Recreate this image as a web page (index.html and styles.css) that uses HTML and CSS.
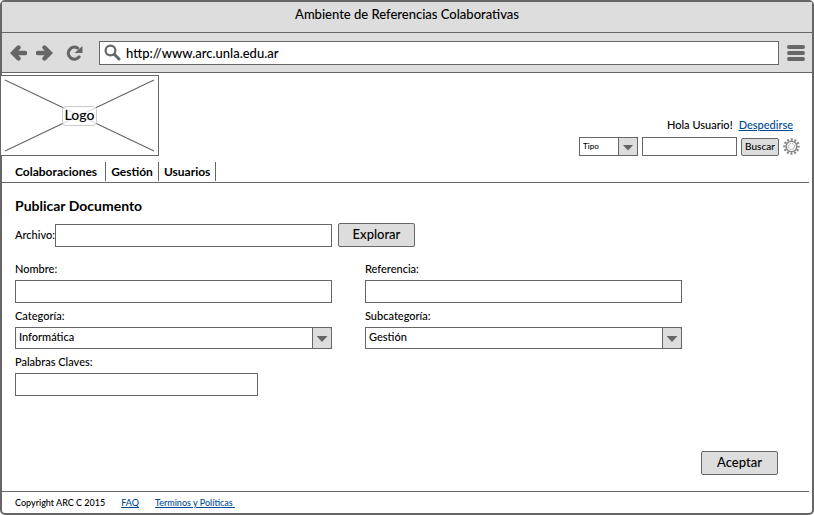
FILE: index.html
```html
<!DOCTYPE html>
<html lang="es">
<head>
<meta charset="utf-8">
<meta name="viewport" content="width=device-width, initial-scale=1">
<title>Ambiente de Referencias Colaborativas</title>
<link rel="stylesheet" href="styles.css">
</head>
<body>
<div class="window">
  <div class="titlebar">Ambiente de Referencias Colaborativas</div>
  <div class="toolbar">
    <div class="history">
      <button class="icon-button" type="button" aria-label="Atrás">
        <svg width="17" height="16" viewBox="0 0 17 16"><path d="M15 8H4M8.500 2.500L3 8l5.500 5.500" fill="none" stroke="#666" stroke-width="4.400" stroke-linecap="round" stroke-linejoin="miter"/></svg>
      </button>
      <button class="icon-button" type="button" aria-label="Adelante">
        <svg width="17" height="16" viewBox="0 0 17 16"><path d="M2 8h11M8.500 2.500L14 8l-5.500 5.500" fill="none" stroke="#666" stroke-width="4.400" stroke-linecap="round" stroke-linejoin="miter"/></svg>
      </button>
      <button class="icon-button reload" type="button" aria-label="Recargar">
        <svg width="17" height="16" viewBox="0 0 17 16"><path d="M11.500 3A6 6 0 1 0 13 12" fill="none" stroke="#666" stroke-width="3.200" stroke-linecap="round"/><path d="M16.500 1v7H8.500z" fill="#666"/></svg>
      </button>
    </div>
    <div class="address">
      <svg width="17" height="17" viewBox="0 0 17 17"><circle cx="6.500" cy="6.500" r="4.900" fill="none" stroke="#666" stroke-width="2.200"/><path d="M10.500 10.500l4.500 4.500" stroke="#666" stroke-width="3" stroke-linecap="round"/></svg>
      <input type="text" aria-label="Dirección" value="http://www.arc.unla.edu.ar">
    </div>
    <button class="icon-button" type="button" aria-label="Menú">
      <svg width="18" height="18" viewBox="0 0 18 18"><path d="M2 3h14M2 9h14M2 15h14" stroke="#666" stroke-width="4" stroke-linecap="round"/></svg>
    </button>
  </div>

  <header class="header">
    <div class="logo">
      <svg class="logo-cross" viewBox="0 0 157 79" preserveAspectRatio="none"><path d="M4 4l149 71M4 75L153 4" stroke="#666" stroke-width="1.200"/></svg>
      <span class="logo-label">Logo</span>
    </div>
    <div class="account">
      <div class="greeting"><span>Hola Usuario!</span><a href="#">Despedirse</a></div>
      <form class="search">
        <div class="select select-small">
          <select aria-label="Tipo"><option>Tipo</option></select>
          <span class="arrow"></span>
        </div>
        <input class="search-text" type="text" aria-label="Texto a buscar">
        <button class="button button-small" type="button">Buscar</button>
        <button class="icon-button gear" type="button" aria-label="Opciones">
          <svg width="17" height="17" viewBox="0 0 17 17" fill="none" stroke="#8c8c8c"><circle cx="8.500" cy="8.500" r="7" stroke-width="2.600" stroke-dasharray="2 1.665" stroke-dashoffset="1"/><circle cx="8.500" cy="8.500" r="5.300" stroke-width="1.600"/><circle cx="8.500" cy="8.500" r="3" stroke-width="1" stroke-dasharray="1.300 1.056"/></svg>
        </button>
      </form>
    </div>
  </header>

  <nav class="nav">
    <a href="#">Colaboraciones</a>
    <a href="#">Gestión</a>
    <a href="#">Usuarios</a>
  </nav>

  <main class="main">
    <h1>Publicar Documento</h1>
    <form class="document">
      <div class="file-row">
        <label for="archivo">Archivo:</label>
        <input id="archivo" class="text" type="text">
        <button class="button" type="button">Explorar</button>
      </div>
      <div class="fields">
        <div class="field">
          <label for="nombre">Nombre:</label>
          <input id="nombre" class="text" type="text">
        </div>
        <div class="field">
          <label for="referencia">Referencia:</label>
          <input id="referencia" class="text" type="text">
        </div>
        <div class="field">
          <label for="categoria">Categoría:</label>
          <div class="select">
            <select id="categoria"><option>Informática</option></select>
            <span class="arrow"></span>
          </div>
        </div>
        <div class="field">
          <label for="subcategoria">Subcategoría:</label>
          <div class="select">
            <select id="subcategoria"><option>Gestión</option></select>
            <span class="arrow"></span>
          </div>
        </div>
        <div class="field field-keywords">
          <label for="palabras">Palabras Claves:</label>
          <input id="palabras" class="text" type="text">
        </div>
      </div>
      <div class="actions">
        <button class="button" type="button">Aceptar</button>
      </div>
    </form>
  </main>

  <footer class="footer">
    <span>Copyright ARC C 2015</span>
    <a href="#">FAQ</a>
    <a href="#">Terminos y Políticas&nbsp;</a>
  </footer>
</div>
</body>
</html>
```
FILE: styles.css
```css
:root {
  --line: #666;
  --panel: #ddd;
  --link: #004a94;
}

* {
  box-sizing: border-box;
}

body {
  margin: 0;
  background: #fff;
  color: #000;
  font: 500 11px/16px Lato, "Liberation Sans", sans-serif;
}

input,
select,
button {
  margin: 0;
  color: inherit;
  font: inherit;
  border-radius: 0;
}

a {
  color: var(--link);
}

svg {
  display: block;
}

.window {
  display: flex;
  flex-direction: column;
  min-height: 100vh;
  border: 2px solid var(--line);
  border-radius: 5px;
}

.titlebar {
  height: 31px;
  padding-top: 4px;
  border-bottom: 1px solid var(--line);
  background: var(--panel);
  font-size: 13px;
  text-align: center;
}

.toolbar {
  display: flex;
  align-items: center;
  gap: 8px;
  height: 40px;
  padding: 0 7px 0 8px;
  border-bottom: 1px solid var(--line);
  background: var(--panel);
}

.history {
  display: flex;
  gap: 9px;
  margin-right: 8px;
}

.reload {
  margin-left: 4px;
}

.icon-button {
  padding: 0;
  border: 0;
  background: none;
}

.address {
  display: flex;
  flex: 1;
  align-items: center;
  gap: 5px;
  height: 24px;
  padding: 0 4px;
  border: 1px solid var(--line);
  background: #fff;
}

.address input {
  flex: 1;
  min-width: 0;
  padding: 0;
  border: 0;
  background: none;
  font-size: 13px;
}

.header {
  display: flex;
  justify-content: space-between;
  margin: 2px 12px 0 -2px;
}

.logo {
  display: grid;
  place-items: center;
  width: 159px;
  height: 81px;
  border: 1px solid var(--line);
  background: #fff;
}

.logo > * {
  grid-area: 1 / 1;
}

.logo-cross {
  width: 100%;
  height: 100%;
}

.logo-label {
  padding: 0 2px 2px;
  border: 1px solid #ccc;
  border-radius: 4px;
  background: rgb(255 255 255 / 80%);
  font-size: 14px;
}

.account {
  display: flex;
  flex-direction: column;
  align-items: flex-end;
  gap: 4px;
  padding-top: 42px;
}

.greeting {
  display: flex;
  gap: 6px;
  padding-right: 7px;
  font-size: 11px;
}

.search {
  display: flex;
  align-items: center;
  gap: 4px;
}

.search-text {
  width: 95px;
  height: 19px;
  border: 1px solid var(--line);
}

.button {
  width: 77px;
  height: 24px;
  padding: 0 0 2px;
  border: 1px solid var(--line);
  border-radius: 2px;
  background: var(--panel);
  font-size: 13px;
  line-height: 16px;
}

.button-small {
  width: 38px;
  height: 18px;
  font-size: 10px;
  line-height: 12px;
}

.select {
  position: relative;
  height: 22px;
}

.select select {
  width: 100%;
  height: 100%;
  padding: 0 22px 2px 3px;
  border: 1px solid var(--line);
  background: #fff;
  appearance: none;
}

.arrow {
  position: absolute;
  top: 0;
  right: 0;
  bottom: 0;
  display: grid;
  place-items: center;
  width: 20px;
  border: 1px solid var(--line);
  border-radius: 0 2px 2px 0;
  background: var(--panel);
  pointer-events: none;
}

.arrow::before {
  content: "";
  width: 11px;
  height: 6px;
  margin-top: 2px;
  background: var(--line);
  clip-path: polygon(0 0, 100% 0, 50% 100%);
}

.select-small {
  width: 59px;
  height: 19px;
  font-size: 8px;
}

.nav {
  display: flex;
  margin-right: 3px;
  padding: 6px 0 1px 8px;
  border-bottom: 1px solid var(--line);
}

.nav a {
  padding: 2px 5px 1px;
  border-right: 1px solid var(--line);
  color: inherit;
  font-size: 12px;
  font-weight: 700;
  text-decoration: none;
}

.nav a:first-child {
  padding-right: 8px;
}

.main {
  display: flex;
  flex: 1;
  flex-direction: column;
  padding: 15px 34px 16px 13px;
}

h1 {
  margin: 0;
  font-size: 14px;
  line-height: 16px;
}

.document {
  display: flex;
  flex: 1;
  flex-direction: column;
}

.file-row {
  display: flex;
  align-items: center;
  max-width: 400px;
  margin: 9px 0 14px;
}

.file-row .text {
  margin-right: 6px;
}

.text {
  flex: 1;
  min-width: 0;
  height: 23px;
  padding: 0 4px;
  border: 1px solid var(--line);
}

.fields {
  display: grid;
  grid-template-columns: repeat(2, minmax(0, 317px));
  gap: 5px 33px;
}

.field {
  display: flex;
  flex-direction: column;
  gap: 3px;
}

.field .text {
  flex: none;
}

.field-keywords {
  max-width: 243px;
}

.actions {
  display: flex;
  justify-content: flex-end;
  margin-top: auto;
}

.footer {
  display: flex;
  gap: 16px;
  height: 22px;
  margin-right: 3px;
  padding: 3px 13px 0;
  border-top: 1px solid var(--line);
  font-size: 9px;
}
```
